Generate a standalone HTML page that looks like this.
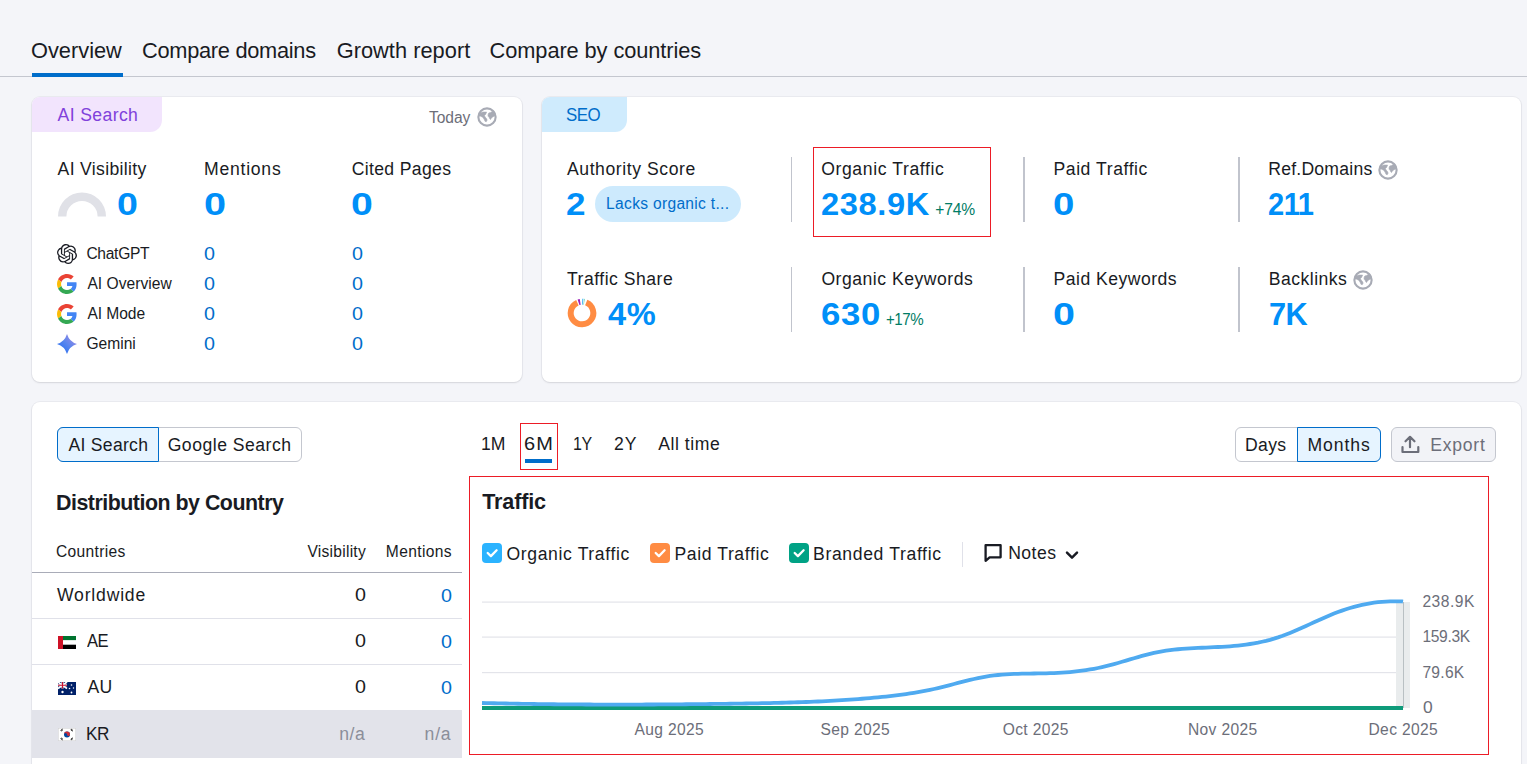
<!DOCTYPE html><html><head><meta charset='utf-8'><style>
html,body{margin:0;padding:0}
body{width:1527px;height:764px;overflow:hidden;background:#f4f5f9;position:relative;font-family:"Liberation Sans",sans-serif}
.t{position:absolute;white-space:pre;font-family:"Liberation Sans",sans-serif;transform-origin:0 0}
.card{position:absolute;background:#fff;border-radius:8px;box-shadow:0 0 0 1px rgba(25,27,35,0.045),0 1px 2px rgba(25,27,35,0.10)}
svg{overflow:visible}
</style></head><body>
<div style='position:absolute;left:0px;top:76px;width:1527px;height:1px;background:#c4c7cf'></div>
<div style='position:absolute;left:32px;top:73px;width:91px;height:4px;background:#006dca'></div>
<div class=card style='left:32px;top:97px;width:490px;height:285px'></div>
<div class=card style='left:542px;top:97px;width:979px;height:285px'></div>
<div class=card style='left:32px;top:402px;width:1489px;height:400px'></div>
<div style='position:absolute;left:32px;top:97px;width:130px;height:35px;background:#f2e4fd;border-radius:8px 0 12px 0'></div>
<div style='position:absolute;left:542px;top:97px;width:85px;height:35px;background:#cfebfd;border-radius:8px 0 12px 0'></div>
<svg width='20' height='20' viewBox='0 0 20 20' style='position:absolute;left:477px;top:107px'><circle cx='10' cy='10' r='8.65' fill='none' stroke='#a8abb5' stroke-width='2.1'/><path fill='#a8abb5' stroke='#a8abb5' stroke-width='0.6' stroke-linejoin='round' d='M2.2,6.8 L4.3,5.5 L6.2,5.1 L9.6,5.1 L8.6,7.4 L7.3,8.7 L8.4,10.3 L9.6,11.8 L10.1,13.1 L9.4,14.6 L8.1,14.4 L7.4,12.8 L6.5,11.2 L5.2,9.9 L3.2,9.1 L1.8,9 Z'/><path fill='#a8abb5' stroke='#a8abb5' stroke-width='0.6' stroke-linejoin='round' d='M11.2,7.4 L11.8,6.0 L13.7,5.4 L15.1,4.6 L17.2,4.6 L18.6,8.6 L16.9,9.3 L15.6,9.9 L14.3,11.2 L13.5,12.6 L12.8,11.8 L12.1,10.3 L11.2,9.3 L11.0,8.0 Z'/></svg>
<svg width='50' height='26' style='position:absolute;left:57px;top:191px'><path d='M1,25.5 A24,24 0 0 1 49,25.5 L40.6,25.5 A15.6,15.6 0 0 0 9.4,25.5 Z' fill='#e0e1e7'/></svg>
<svg width='20' height='20' viewBox='0 0 24 24' style='position:absolute;left:57px;top:244px'><path fill='#191b23' d='M22.2819 9.8211a5.9847 5.9847 0 0 0-.5157-4.9108 6.0462 6.0462 0 0 0-6.5098-2.9A6.0651 6.0651 0 0 0 4.9807 4.1818a5.9847 5.9847 0 0 0-3.9977 2.9 6.0462 6.0462 0 0 0 .7427 7.0966 5.98 5.98 0 0 0 .511 4.9107 6.051 6.051 0 0 0 6.5146 2.9001A5.9847 5.9847 0 0 0 13.2599 24a6.0557 6.0557 0 0 0 5.7718-4.2058 5.9894 5.9894 0 0 0 3.9977-2.9001 6.0557 6.0557 0 0 0-.7475-7.0729zm-9.022 12.6081a4.4755 4.4755 0 0 1-2.8764-1.0408l.1419-.0804 4.7783-2.7582a.7948.7948 0 0 0 .3927-.6813v-6.7369l2.02 1.1686a.071.071 0 0 1 .038.052v5.5826a4.504 4.504 0 0 1-4.4945 4.4944zm-9.6607-4.1254a4.4708 4.4708 0 0 1-.5346-3.0137l.142.0852 4.783 2.7582a.7712.7712 0 0 0 .7806 0l5.8428-3.3685v2.3324a.0804.0804 0 0 1-.0332.0615L9.74 19.9502a4.4992 4.4992 0 0 1-6.1408-1.6464zM2.3408 7.8956a4.485 4.485 0 0 1 2.3655-1.9728V11.6a.7664.7664 0 0 0 .3879.6765l5.8144 3.3543-2.0201 1.1685a.0757.0757 0 0 1-.071 0l-4.8303-2.7865A4.504 4.504 0 0 1 2.3408 7.872zm16.5963 3.8558L13.1038 8.364 15.1192 7.2a.0757.0757 0 0 1 .071 0l4.8303 2.7913a4.4944 4.4944 0 0 1-.6765 8.1042v-5.6772a.79.79 0 0 0-.407-.667zm2.0107-3.0231l-.142-.0852-4.7735-2.7818a.7759.7759 0 0 0-.7854 0L9.409 9.2297V6.8974a.0662.0662 0 0 1 .0284-.0615l4.8303-2.7866a4.4992 4.4992 0 0 1 6.6802 4.66zM8.3065 12.863l-2.02-1.1638a.0804.0804 0 0 1-.038-.0567V6.0742a4.4992 4.4992 0 0 1 7.3757-3.4537l-.142.0805L8.704 5.459a.7948.7948 0 0 0-.3927.6813zm1.0976-2.3654l2.602-1.4998 2.6069 1.4998v2.9994l-2.5974 1.4997-2.6067-1.4997Z'/></svg>
<svg width='20' height='20' viewBox='0 0 48 48' style='position:absolute;left:57px;top:274px'><path fill='#EA4335' d='M24 9.5c3.54 0 6.71 1.22 9.21 3.6l6.85-6.85C35.9 2.38 30.47 0 24 0 14.62 0 6.51 5.38 2.56 13.22l7.98 6.19C12.43 13.72 17.74 9.5 24 9.5z'/><path fill='#4285F4' d='M46.98 24.55c0-1.57-.15-3.09-.38-4.55H24v9.02h12.94c-.58 2.960-2.26 5.48-4.78 7.18l7.73 6c4.51-4.18 7.09-10.36 7.09-17.65z'/><path fill='#FBBC05' d='M10.53 28.59c-.48-1.450-.76-2.99-.76-4.59s.27-3.14.76-4.59l-7.98-6.19C.92 16.46 0 20.12 0 24c0 3.88.92 7.54 2.56 10.78l7.97-6.19z'/><path fill='#34A853' d='M24 48c6.48 0 11.93-2.13 15.89-5.81l-7.73-6c-2.15 1.45-4.92 2.3-8.16 2.3-6.26 0-11.57-4.22-13.47-9.91l-7.98 6.19C6.51 42.62 14.62 48 24 48z'/></svg>
<svg width='20' height='20' viewBox='0 0 48 48' style='position:absolute;left:57px;top:304px'><path fill='#EA4335' d='M24 9.5c3.54 0 6.71 1.22 9.21 3.6l6.85-6.85C35.9 2.38 30.47 0 24 0 14.62 0 6.51 5.38 2.56 13.22l7.98 6.19C12.43 13.72 17.74 9.5 24 9.5z'/><path fill='#4285F4' d='M46.98 24.55c0-1.57-.15-3.09-.38-4.55H24v9.02h12.94c-.58 2.960-2.26 5.48-4.78 7.18l7.73 6c4.51-4.18 7.09-10.36 7.09-17.65z'/><path fill='#FBBC05' d='M10.53 28.59c-.48-1.450-.76-2.99-.76-4.59s.27-3.14.76-4.59l-7.98-6.19C.92 16.46 0 20.12 0 24c0 3.88.92 7.54 2.56 10.78l7.97-6.19z'/><path fill='#34A853' d='M24 48c6.48 0 11.93-2.13 15.89-5.81l-7.73-6c-2.15 1.45-4.92 2.3-8.16 2.3-6.26 0-11.57-4.22-13.47-9.91l-7.98 6.19C6.51 42.62 14.62 48 24 48z'/></svg>
<svg width='20' height='20' viewBox='0 0 20 20' style='position:absolute;left:57px;top:334px'><defs><linearGradient id='gm' x1='0' y1='1' x2='1' y2='0'><stop offset='0' stop-color='#1366f2'/><stop offset='0.5' stop-color='#5a86ee'/><stop offset='1' stop-color='#b18be0'/></linearGradient></defs><path fill='url(#gm)' d='M10,0 Q12.3,7.7 20,10 Q12.3,12.3 10,20 Q7.7,12.3 0,10 Q7.7,7.7 10,0 Z'/></svg>
<div style='position:absolute;left:595px;top:186px;width:146px;height:36px;background:#cdeafd;border-radius:18px'></div>
<div style='position:absolute;left:791px;top:157px;width:1px;height:65px;background:#c1c4cd'></div>
<div style='position:absolute;left:791px;top:267px;width:1px;height:65px;background:#c1c4cd'></div>
<div style='position:absolute;left:1023px;top:157px;width:2px;height:65px;background:#c1c4cd'></div>
<div style='position:absolute;left:1023px;top:267px;width:2px;height:65px;background:#c1c4cd'></div>
<div style='position:absolute;left:1238px;top:157px;width:2px;height:65px;background:#c1c4cd'></div>
<div style='position:absolute;left:1238px;top:267px;width:2px;height:65px;background:#c1c4cd'></div>
<div style='position:absolute;left:813px;top:147px;width:176px;height:88px;border:1px solid #ec1c26'></div>
<svg width='20' height='20' viewBox='0 0 20 20' style='position:absolute;left:1378px;top:160px'><circle cx='10' cy='10' r='8.65' fill='none' stroke='#a8abb5' stroke-width='2.1'/><path fill='#a8abb5' stroke='#a8abb5' stroke-width='0.6' stroke-linejoin='round' d='M2.2,6.8 L4.3,5.5 L6.2,5.1 L9.6,5.1 L8.6,7.4 L7.3,8.7 L8.4,10.3 L9.6,11.8 L10.1,13.1 L9.4,14.6 L8.1,14.4 L7.4,12.8 L6.5,11.2 L5.2,9.9 L3.2,9.1 L1.8,9 Z'/><path fill='#a8abb5' stroke='#a8abb5' stroke-width='0.6' stroke-linejoin='round' d='M11.2,7.4 L11.8,6.0 L13.7,5.4 L15.1,4.6 L17.2,4.6 L18.6,8.6 L16.9,9.3 L15.6,9.9 L14.3,11.2 L13.5,12.6 L12.8,11.8 L12.1,10.3 L11.2,9.3 L11.0,8.0 Z'/></svg>
<svg width='20' height='20' viewBox='0 0 20 20' style='position:absolute;left:1353px;top:270px'><circle cx='10' cy='10' r='8.65' fill='none' stroke='#a8abb5' stroke-width='2.1'/><path fill='#a8abb5' stroke='#a8abb5' stroke-width='0.6' stroke-linejoin='round' d='M2.2,6.8 L4.3,5.5 L6.2,5.1 L9.6,5.1 L8.6,7.4 L7.3,8.7 L8.4,10.3 L9.6,11.8 L10.1,13.1 L9.4,14.6 L8.1,14.4 L7.4,12.8 L6.5,11.2 L5.2,9.9 L3.2,9.1 L1.8,9 Z'/><path fill='#a8abb5' stroke='#a8abb5' stroke-width='0.6' stroke-linejoin='round' d='M11.2,7.4 L11.8,6.0 L13.7,5.4 L15.1,4.6 L17.2,4.6 L18.6,8.6 L16.9,9.3 L15.6,9.9 L14.3,11.2 L13.5,12.6 L12.8,11.8 L12.1,10.3 L11.2,9.3 L11.0,8.0 Z'/></svg>
<svg width='1527' height='764' style='position:absolute;left:0;top:0;pointer-events:none'><path d='M586.23,302.52 A11.3,11.3 0 1 1 577.40,302.68' fill='none' stroke='#ff8c43' stroke-width='6'/><path d='M578.51,302.25 A11.3,11.3 0 0 1 580.23,301.84' fill='none' stroke='#9d22b9' stroke-width='6'/><path d='M582.30,301.70 A11.3,11.3 0 0 1 583.08,301.75' fill='none' stroke='#17a3f5' stroke-width='6'/><path d='M583.67,301.82 A11.3,11.3 0 0 1 584.35,301.95' fill='none' stroke='#7fdcb8' stroke-width='6'/></svg>
<div style='position:absolute;left:57px;top:427px;width:243px;height:33px;border:1px solid #c4c7cf;border-radius:6px;background:#fff'></div>
<div style='position:absolute;left:57px;top:427px;width:100px;height:33px;border:1px solid #006dca;border-radius:6px 0 0 6px;background:#e6f4ff'></div>
<div style='position:absolute;left:525px;top:459px;width:27px;height:4px;background:#006dca'></div>
<div style='position:absolute;left:520px;top:423px;width:36px;height:45px;border:1px solid #ec1c26'></div>
<div style='position:absolute;left:1235px;top:427px;width:144px;height:33px;border:1px solid #c4c7cf;border-radius:6px;background:#fff'></div>
<div style='position:absolute;left:1297px;top:427px;width:82px;height:33px;border:1px solid #006dca;border-radius:0 6px 6px 0;background:#e6f4ff'></div>
<div style='position:absolute;left:1391px;top:427px;width:103px;height:33px;border:1px solid #c4c7cf;border-radius:6px;background:#f2f3f7'></div>
<svg width='20' height='20' viewBox='0 0 20 20' style='position:absolute;left:1400px;top:434px'><path d='M10,3 V13.2 M5.5,7.3 L10,2.8 L14.5,7.3 M2.5,13 V18 H18.3 V13' fill='none' stroke='#6c6e79' stroke-width='2.2' stroke-linecap='round' stroke-linejoin='round'/></svg>
<div style='position:absolute;left:32px;top:572px;width:430px;height:1px;background:#a9acb8'></div>
<div style='position:absolute;left:32px;top:618px;width:430px;height:1px;background:#e0e1e9'></div>
<div style='position:absolute;left:32px;top:664px;width:430px;height:1px;background:#e0e1e9'></div>
<div style='position:absolute;left:32px;top:710px;width:430px;height:48px;background:#e2e3ea'></div>
<svg width='18' height='13' viewBox='0 0 18 13' style='position:absolute;left:58px;top:636px'><rect width='18' height='4.4' fill='#00732f'/><rect y='4.3' width='18' height='4.4' fill='#fff'/><rect y='8.7' width='18' height='4.3' fill='#000'/><rect width='5' height='13' fill='#ce1126'/></svg>
<svg width='18' height='13' viewBox='0 0 18 13' style='position:absolute;left:58px;top:682px'><rect width='18' height='13' fill='#012169'/><path d='M0,0 L9,6.5 M9,0 L0,6.5' stroke='#fff' stroke-width='1.6'/><path d='M4.5,0 V6.5 M0,3.25 H9' stroke='#fff' stroke-width='2.2'/><path d='M4.5,0 V6.5 M0,3.25 H9' stroke='#c8102e' stroke-width='1.2'/><circle cx='4.5' cy='10' r='1.2' fill='#fff'/><circle cx='13.5' cy='3' r='0.8' fill='#fff'/><circle cx='11.5' cy='6.5' r='0.8' fill='#fff'/><circle cx='15.5' cy='6' r='0.7' fill='#fff'/><circle cx='13.5' cy='10.5' r='0.9' fill='#fff'/></svg>
<svg width='18' height='13' viewBox='0 0 18 13' style='position:absolute;left:58px;top:728px'><rect x='0.25' y='0.25' width='17.5' height='12.5' fill='#fff' stroke='#d0d0d0' stroke-width='0.5'/><circle cx='9' cy='6.5' r='3' fill='#0047a0'/><path d='M6,6.5 A3,3 0 0 1 12,6.5 A1.5,1.5 0 0 1 9,6.5 A1.5,1.5 0 0 0 6,6.5Z' fill='#cd2e3a'/><path d='M2.5,2.5 L4.5,1 M3,3.2 L5,1.7 M13,1 L15,2.5 M12.7,1.8 L14.6,3.2 M2.5,10.5 L4.5,12 M3,9.8 L5,11.3 M13,12 L15,10.5 M12.7,11.3 L14.6,9.8' stroke='#222' stroke-width='0.9'/></svg>
<div style='position:absolute;left:469px;top:476px;width:1018px;height:277px;border:1px solid #ec1c26'></div>
<svg width='20' height='20' viewBox='0 0 20 20' style='position:absolute;left:482px;top:543px'><rect width='20' height='20' rx='4' fill='#2bb3ff'/><path d='M5.7,10 L8.9,13.1 L14.6,7.3' fill='none' stroke='#fff' stroke-width='2.3' stroke-linecap='round' stroke-linejoin='round'/></svg>
<svg width='20' height='20' viewBox='0 0 20 20' style='position:absolute;left:650px;top:543px'><rect width='20' height='20' rx='4' fill='#ff8c43'/><path d='M5.7,10 L8.9,13.1 L14.6,7.3' fill='none' stroke='#fff' stroke-width='2.3' stroke-linecap='round' stroke-linejoin='round'/></svg>
<svg width='20' height='20' viewBox='0 0 20 20' style='position:absolute;left:789px;top:543px'><rect width='20' height='20' rx='4' fill='#00a285'/><path d='M5.7,10 L8.9,13.1 L14.6,7.3' fill='none' stroke='#fff' stroke-width='2.3' stroke-linecap='round' stroke-linejoin='round'/></svg>
<div style='position:absolute;left:962px;top:542px;width:1px;height:25px;background:#e0e1e9'></div>
<svg width='24' height='24' viewBox='0 0 24 24' style='position:absolute;left:980px;top:540px'><path d='M5.6,20.8 V5.2 H20.6 V17.3 H9.6 Z' fill='none' stroke='#191b23' stroke-width='2.3' stroke-linejoin='round'/></svg>
<svg width='16' height='12' viewBox='0 0 16 12' style='position:absolute;left:1064px;top:549px'><path d='M3,3.7 L8,8.6 L13,3.7' fill='none' stroke='#191b23' stroke-width='2.5' stroke-linecap='round' stroke-linejoin='round'/></svg>
<svg width='1527' height='764' style='position:absolute;left:0;top:0'><rect x='482' y='601.5' width='921' height='1.2' fill='#e3e4ea'/><rect x='482' y='636.5' width='921' height='1.2' fill='#e3e4ea'/><rect x='482' y='672.0' width='921' height='1.2' fill='#e3e4ea'/><rect x='1396' y='602' width='14' height='106' fill='#e9eced'/><rect x='1403' y='602' width='1' height='106' fill='#b9c0c3'/><rect x='482' y='706' width='921' height='4' fill='#0e9b7a'/><path d='M482,702.99 L486,703.09 L490,703.18 L494,703.27 L498,703.35 L502,703.44 L506,703.52 L510,703.60 L514,703.67 L518,703.74 L522,703.81 L526,703.87 L530,703.93 L534,703.99 L538,704.05 L542,704.10 L546,704.15 L550,704.20 L554,704.24 L558,704.28 L562,704.32 L566,704.36 L570,704.39 L574,704.42 L578,704.45 L582,704.47 L586,704.49 L590,704.51 L594,704.53 L598,704.54 L602,704.55 L606,704.56 L610,704.57 L614,704.57 L618,704.58 L622,704.58 L626,704.57 L630,704.57 L634,704.56 L638,704.55 L642,704.54 L646,704.52 L650,704.50 L654,704.49 L658,704.46 L662,704.44 L666,704.41 L670,704.39 L674,704.36 L678,704.32 L682,704.29 L686,704.25 L690,704.22 L694,704.18 L698,704.13 L702,704.09 L706,704.04 L710,704.00 L714,703.95 L718,703.90 L722,703.84 L726,703.79 L730,703.73 L734,703.67 L738,703.61 L742,703.55 L746,703.49 L750,703.42 L754,703.35 L758,703.28 L762,703.20 L766,703.12 L770,703.04 L774,702.95 L778,702.85 L782,702.75 L786,702.64 L790,702.52 L794,702.40 L798,702.27 L802,702.13 L806,701.98 L810,701.82 L814,701.66 L818,701.48 L822,701.29 L826,701.09 L830,700.89 L834,700.66 L838,700.43 L842,700.19 L846,699.93 L850,699.66 L854,699.37 L858,699.07 L862,698.76 L866,698.43 L870,698.08 L874,697.72 L878,697.34 L882,696.95 L886,696.53 L890,696.10 L894,695.64 L898,695.15 L902,694.63 L906,694.08 L910,693.49 L914,692.86 L918,692.19 L922,691.48 L926,690.71 L930,689.89 L934,689.01 L938,688.08 L942,687.10 L946,686.09 L950,685.05 L954,684.00 L958,682.95 L962,681.91 L966,680.90 L970,679.92 L974,678.99 L978,678.12 L982,677.32 L986,676.60 L990,675.97 L994,675.45 L998,675.01 L1002,674.64 L1006,674.35 L1010,674.12 L1014,673.94 L1018,673.80 L1022,673.70 L1026,673.62 L1030,673.56 L1034,673.51 L1038,673.46 L1042,673.39 L1046,673.31 L1050,673.20 L1054,673.06 L1058,672.87 L1062,672.64 L1066,672.36 L1070,672.03 L1074,671.64 L1078,671.20 L1082,670.69 L1086,670.12 L1090,669.48 L1094,668.77 L1098,667.99 L1102,667.13 L1106,666.19 L1110,665.17 L1114,664.09 L1118,662.97 L1122,661.80 L1126,660.62 L1130,659.43 L1134,658.24 L1138,657.08 L1142,655.95 L1146,654.88 L1150,653.87 L1154,652.93 L1158,652.09 L1162,651.35 L1166,650.71 L1170,650.15 L1174,649.66 L1178,649.25 L1182,648.89 L1186,648.59 L1190,648.33 L1194,648.11 L1198,647.91 L1202,647.73 L1206,647.56 L1210,647.39 L1214,647.22 L1218,647.02 L1222,646.81 L1226,646.56 L1230,646.27 L1234,645.93 L1238,645.54 L1242,645.09 L1246,644.58 L1250,644.00 L1254,643.33 L1258,642.59 L1262,641.75 L1266,640.83 L1270,639.80 L1274,638.66 L1278,637.41 L1282,636.05 L1286,634.57 L1290,632.99 L1294,631.32 L1298,629.59 L1302,627.81 L1306,625.99 L1310,624.14 L1314,622.30 L1318,620.47 L1322,618.66 L1326,616.90 L1330,615.20 L1334,613.57 L1338,612.04 L1342,610.59 L1346,609.25 L1350,608.00 L1354,606.86 L1358,605.81 L1362,604.88 L1366,604.05 L1370,603.32 L1374,602.71 L1378,602.22 L1382,601.83 L1386,601.57 L1390,601.42 L1394,601.40 L1398,601.40 L1402,601.40 L1403,601.60' fill='none' stroke='#4faaf0' stroke-width='3.8' stroke-linejoin='round'/></svg>
<span class=t id='tab1' style='left:31.00px;top:40.00px;font-size:21.8px;line-height:21.8px;color:#191b23;letter-spacing:0.000px;'>Overview</span>
<span class=t id='tab2' style='left:142.00px;top:40.00px;font-size:21.8px;line-height:21.8px;color:#191b23;letter-spacing:-0.286px;'>Compare domains</span>
<span class=t id='tab3' style='left:336.70px;top:40.00px;font-size:21.8px;line-height:21.8px;color:#191b23;letter-spacing:0.025px;'>Growth report</span>
<span class=t id='tab4' style='left:489.60px;top:40.00px;font-size:21.8px;line-height:21.8px;color:#191b23;letter-spacing:-0.089px;'>Compare by countries</span>
<span class=t id='aipill' style='left:57.60px;top:107.00px;font-size:17.6px;line-height:17.6px;color:#8041db;letter-spacing:0.375px;'>AI Search</span>
<span class=t id='today' style='left:429.10px;top:110.00px;font-size:15.6px;line-height:15.6px;color:#6c6e79;letter-spacing:-0.100px;'>Today</span>
<span class=t id='aivis' style='left:57.60px;top:161.00px;font-size:17.6px;line-height:17.6px;color:#191b23;letter-spacing:0.325px;'>AI Visibility</span>
<span class=t id='ment' style='left:204.10px;top:161.00px;font-size:17.6px;line-height:17.6px;color:#191b23;letter-spacing:0.743px;'>Mentions</span>
<span class=t id='cited' style='left:351.70px;top:161.00px;font-size:17.6px;line-height:17.6px;color:#191b23;letter-spacing:0.350px;'>Cited Pages</span>
<span class=t id='big0a' style='left:116.80px;top:189.00px;font-size:31.3px;line-height:31.3px;color:#008ff8;font-weight:700;transform:scaleX(1.2000);'>0</span>
<span class=t id='big0b' style='left:203.73px;top:189.00px;font-size:31.3px;line-height:31.3px;color:#008ff8;font-weight:700;transform:scaleX(1.2667);'>0</span>
<span class=t id='big0c' style='left:351.45px;top:189.00px;font-size:31.3px;line-height:31.3px;color:#008ff8;font-weight:700;transform:scaleX(1.2533);'>0</span>
<span class=t id='chatgpt' style='left:86.40px;top:246.00px;font-size:15.6px;line-height:15.6px;color:#191b23;letter-spacing:-0.300px;'>ChatGPT</span>
<span class=t id='aiov' style='left:87.40px;top:276.00px;font-size:15.6px;line-height:15.6px;color:#191b23;letter-spacing:0.030px;'>AI Overview</span>
<span class=t id='aimode' style='left:87.40px;top:306.00px;font-size:15.6px;line-height:15.6px;color:#191b23;letter-spacing:-0.067px;'>AI Mode</span>
<span class=t id='gemini' style='left:86.40px;top:336.00px;font-size:15.6px;line-height:15.6px;color:#191b23;letter-spacing:0.000px;'>Gemini</span>
<span class=t id='r0a' style='left:204.32px;top:246.00px;font-size:17.6px;line-height:17.6px;color:#006dca;transform:scaleX(1.1200);'>0</span>
<span class=t id='r0b' style='left:204.32px;top:276.00px;font-size:17.6px;line-height:17.6px;color:#006dca;transform:scaleX(1.1200);'>0</span>
<span class=t id='r0c' style='left:204.32px;top:306.00px;font-size:17.6px;line-height:17.6px;color:#006dca;transform:scaleX(1.1200);'>0</span>
<span class=t id='r0d' style='left:204.32px;top:336.00px;font-size:17.6px;line-height:17.6px;color:#006dca;transform:scaleX(1.1200);'>0</span>
<span class=t id='r1a' style='left:352.02px;top:246.00px;font-size:17.6px;line-height:17.6px;color:#006dca;transform:scaleX(1.1200);'>0</span>
<span class=t id='r1b' style='left:352.02px;top:276.00px;font-size:17.6px;line-height:17.6px;color:#006dca;transform:scaleX(1.1200);'>0</span>
<span class=t id='r1c' style='left:352.02px;top:306.00px;font-size:17.6px;line-height:17.6px;color:#006dca;transform:scaleX(1.1200);'>0</span>
<span class=t id='r1d' style='left:352.02px;top:336.00px;font-size:17.6px;line-height:17.6px;color:#006dca;transform:scaleX(1.1200);'>0</span>
<span class=t id='seopill' style='left:566.40px;top:107.00px;font-size:17.6px;line-height:17.6px;color:#006dca;letter-spacing:-0.500px;transform:scaleX(0.9600);'>SEO</span>
<span class=t id='auth' style='left:567.00px;top:161.00px;font-size:17.6px;line-height:17.6px;color:#191b23;letter-spacing:0.571px;'>Authority Score</span>
<span class=t id='two' style='left:566.28px;top:189.00px;font-size:31.3px;line-height:31.3px;color:#008ff8;font-weight:700;transform:scaleX(1.1200);'>2</span>
<span class=t id='lacks' style='left:606.10px;top:196.00px;font-size:15.6px;line-height:15.6px;color:#006dca;letter-spacing:0.300px;'>Lacks organic t...</span>
<span class=t id='orgtr' style='left:821.20px;top:161.00px;font-size:17.6px;line-height:17.6px;color:#191b23;letter-spacing:0.614px;'>Organic Traffic</span>
<span class=t id='v238' style='left:821.00px;top:189.00px;font-size:31.3px;line-height:31.3px;color:#008ff8;font-weight:700;letter-spacing:0.600px;transform:scaleX(1.0431);'>238.9K</span>
<span class=t id='p74' style='left:935.30px;top:202.00px;font-size:15.6px;line-height:15.6px;color:#007c65;letter-spacing:-0.167px;'>+74%</span>
<span class=t id='paidtr' style='left:1053.50px;top:161.00px;font-size:17.6px;line-height:17.6px;color:#191b23;letter-spacing:0.564px;'>Paid Traffic</span>
<span class=t id='v0p' style='left:1053.27px;top:189.00px;font-size:31.3px;line-height:31.3px;color:#008ff8;font-weight:700;transform:scaleX(1.2267);'>0</span>
<span class=t id='refd' style='left:1268.30px;top:161.00px;font-size:17.6px;line-height:17.6px;color:#191b23;letter-spacing:0.220px;'>Ref.Domains</span>
<span class=t id='v211' style='left:1268.30px;top:189.00px;font-size:31.3px;line-height:31.3px;color:#008ff8;font-weight:700;letter-spacing:-0.500px;transform:scaleX(0.9292);'>211</span>
<span class=t id='tshare' style='left:567.00px;top:271.00px;font-size:17.6px;line-height:17.6px;color:#191b23;letter-spacing:0.500px;'>Traffic Share</span>
<span class=t id='v4' style='left:607.60px;top:299.00px;font-size:31.3px;line-height:31.3px;color:#008ff8;font-weight:700;letter-spacing:0.600px;transform:scaleX(1.0417);'>4%</span>
<span class=t id='orgkw' style='left:821.40px;top:271.00px;font-size:17.6px;line-height:17.6px;color:#191b23;letter-spacing:0.513px;'>Organic Keywords</span>
<span class=t id='v630' style='left:821.40px;top:299.00px;font-size:31.3px;line-height:31.3px;color:#008ff8;font-weight:700;letter-spacing:0.600px;transform:scaleX(1.1094);'>630</span>
<span class=t id='p17' style='left:886.00px;top:312.00px;font-size:15.6px;line-height:15.6px;color:#007c65;letter-spacing:-0.500px;transform:scaleX(0.9680);'>+17%</span>
<span class=t id='paidkw' style='left:1053.60px;top:271.00px;font-size:17.6px;line-height:17.6px;color:#191b23;letter-spacing:0.475px;'>Paid Keywords</span>
<span class=t id='v0k' style='left:1053.34px;top:299.00px;font-size:31.3px;line-height:31.3px;color:#008ff8;font-weight:700;transform:scaleX(1.2600);'>0</span>
<span class=t id='backl' style='left:1268.80px;top:271.00px;font-size:17.6px;line-height:17.6px;color:#191b23;letter-spacing:0.463px;'>Backlinks</span>
<span class=t id='v7k' style='left:1268.80px;top:299.00px;font-size:31.3px;line-height:31.3px;color:#008ff8;font-weight:700;letter-spacing:-0.500px;transform:scaleX(0.9818);'>7K</span>
<span class=t id='segai' style='left:68.50px;top:437.00px;font-size:17.6px;line-height:17.6px;color:#191b23;letter-spacing:0.275px;'>AI Search</span>
<span class=t id='seggo' style='left:167.70px;top:437.00px;font-size:17.6px;line-height:17.6px;color:#191b23;letter-spacing:0.500px;'>Google Search</span>
<span class=t id='p1m' style='left:481.00px;top:436.00px;font-size:17.6px;line-height:17.6px;color:#191b23;letter-spacing:0.000px;'>1M</span>
<span class=t id='p6m' style='left:524.30px;top:436.00px;font-size:17.6px;line-height:17.6px;color:#191b23;letter-spacing:1.000px;transform:scaleX(1.1348);'>6M</span>
<span class=t id='p1y' style='left:573.00px;top:436.00px;font-size:17.6px;line-height:17.6px;color:#191b23;letter-spacing:-0.500px;transform:scaleX(0.9077);'>1Y</span>
<span class=t id='p2y' style='left:614.00px;top:436.00px;font-size:17.6px;line-height:17.6px;color:#191b23;letter-spacing:1.000px;'>2Y</span>
<span class=t id='pall' style='left:658.20px;top:436.00px;font-size:17.6px;line-height:17.6px;color:#191b23;letter-spacing:0.543px;'>All time</span>
<span class=t id='days' style='left:1245.00px;top:437.00px;font-size:17.6px;line-height:17.6px;color:#191b23;letter-spacing:0.333px;'>Days</span>
<span class=t id='months' style='left:1307.40px;top:437.00px;font-size:17.6px;line-height:17.6px;color:#191b23;letter-spacing:0.920px;'>Months</span>
<span class=t id='export' style='left:1430.30px;top:437.00px;font-size:17.6px;line-height:17.6px;color:#6c6e79;letter-spacing:0.740px;'>Export</span>
<span class=t id='distr' style='left:56.40px;top:491.50px;font-size:21.6px;line-height:21.6px;color:#191b23;font-weight:700;letter-spacing:-0.500px;transform:scaleX(0.9904);'>Distribution by Country</span>
<span class=t id='traffic' style='left:482.30px;top:491.00px;font-size:21.6px;line-height:21.6px;color:#191b23;font-weight:700;letter-spacing:-0.183px;'>Traffic</span>
<span class=t id='hcount' style='left:56.00px;top:544.00px;font-size:15.6px;line-height:15.6px;color:#191b23;letter-spacing:0.312px;'>Countries</span>
<span class=t id='hvis' style='left:307.50px;top:544.00px;font-size:15.6px;line-height:15.6px;color:#191b23;letter-spacing:0.244px;'>Visibility</span>
<span class=t id='hment' style='left:385.80px;top:544.00px;font-size:15.6px;line-height:15.6px;color:#191b23;letter-spacing:0.357px;'>Mentions</span>
<span class=t id='ww' style='left:57.00px;top:587.00px;font-size:17.6px;line-height:17.6px;color:#191b23;letter-spacing:0.800px;'>Worldwide</span>
<span class=t id='ae' style='left:87.40px;top:633.00px;font-size:17.6px;line-height:17.6px;color:#191b23;letter-spacing:-0.500px;transform:scaleX(0.9422);'>AE</span>
<span class=t id='au' style='left:87.40px;top:679.00px;font-size:17.6px;line-height:17.6px;color:#191b23;letter-spacing:0.300px;'>AU</span>
<span class=t id='kr' style='left:86.40px;top:725.50px;font-size:17.6px;line-height:17.6px;color:#191b23;letter-spacing:-0.500px;transform:scaleX(0.9778);'>KR</span>
<span class=t id='t0a' style='left:354.97px;top:587.00px;font-size:17.6px;line-height:17.6px;color:#191b23;transform:scaleX(1.1200);'>0</span>
<span class=t id='t0b' style='left:354.97px;top:633.00px;font-size:17.6px;line-height:17.6px;color:#191b23;transform:scaleX(1.1200);'>0</span>
<span class=t id='t0c' style='left:354.97px;top:679.00px;font-size:17.6px;line-height:17.6px;color:#191b23;transform:scaleX(1.1200);'>0</span>
<span class=t id='t1a' style='left:440.77px;top:588.00px;font-size:17.6px;line-height:17.6px;color:#006dca;transform:scaleX(1.1200);'>0</span>
<span class=t id='t1b' style='left:440.77px;top:634.00px;font-size:17.6px;line-height:17.6px;color:#006dca;transform:scaleX(1.1200);'>0</span>
<span class=t id='t1c' style='left:440.77px;top:680.00px;font-size:17.6px;line-height:17.6px;color:#006dca;transform:scaleX(1.1200);'>0</span>
<span class=t id='na1' style='left:339.20px;top:726.00px;font-size:17.6px;line-height:17.6px;color:#8b8e99;letter-spacing:0.600px;'>n/a</span>
<span class=t id='na2' style='left:424.50px;top:726.00px;font-size:17.6px;line-height:17.6px;color:#8b8e99;letter-spacing:0.850px;'>n/a</span>
<span class=t id='lgorg' style='left:506.50px;top:546.00px;font-size:17.6px;line-height:17.6px;color:#191b23;letter-spacing:0.621px;'>Organic Traffic</span>
<span class=t id='lgpaid' style='left:674.50px;top:546.00px;font-size:17.6px;line-height:17.6px;color:#191b23;letter-spacing:0.591px;'>Paid Traffic</span>
<span class=t id='lgbr' style='left:813.00px;top:546.00px;font-size:17.6px;line-height:17.6px;color:#191b23;letter-spacing:0.643px;'>Branded Traffic</span>
<span class=t id='notes' style='left:1008.20px;top:545.00px;font-size:17.6px;line-height:17.6px;color:#191b23;letter-spacing:0.450px;'>Notes</span>
<span class=t id='xaug' style='left:634.40px;top:722.00px;font-size:15.6px;line-height:15.6px;color:#6c6e79;letter-spacing:0.371px;'>Aug 2025</span>
<span class=t id='xsep' style='left:820.40px;top:722.00px;font-size:15.6px;line-height:15.6px;color:#6c6e79;letter-spacing:0.371px;'>Sep 2025</span>
<span class=t id='xoct' style='left:1002.70px;top:722.00px;font-size:15.6px;line-height:15.6px;color:#6c6e79;letter-spacing:0.357px;'>Oct 2025</span>
<span class=t id='xnov' style='left:1187.90px;top:722.00px;font-size:15.6px;line-height:15.6px;color:#6c6e79;letter-spacing:0.371px;'>Nov 2025</span>
<span class=t id='xdec' style='left:1368.50px;top:722.00px;font-size:15.6px;line-height:15.6px;color:#6c6e79;letter-spacing:0.357px;'>Dec 2025</span>
<span class=t id='y1' style='left:1422.40px;top:594.00px;font-size:15.6px;line-height:15.6px;color:#6c6e79;letter-spacing:0.520px;'>238.9K</span>
<span class=t id='y2' style='left:1422.40px;top:629.00px;font-size:15.6px;line-height:15.6px;color:#6c6e79;letter-spacing:-0.320px;'>159.3K</span>
<span class=t id='y3' style='left:1422.40px;top:664.50px;font-size:15.6px;line-height:15.6px;color:#6c6e79;letter-spacing:0.275px;'>79.6K</span>
<span class=t id='y4' style='left:1422.78px;top:700.00px;font-size:15.6px;line-height:15.6px;color:#6c6e79;transform:scaleX(1.1200);'>0</span>
</body></html>
